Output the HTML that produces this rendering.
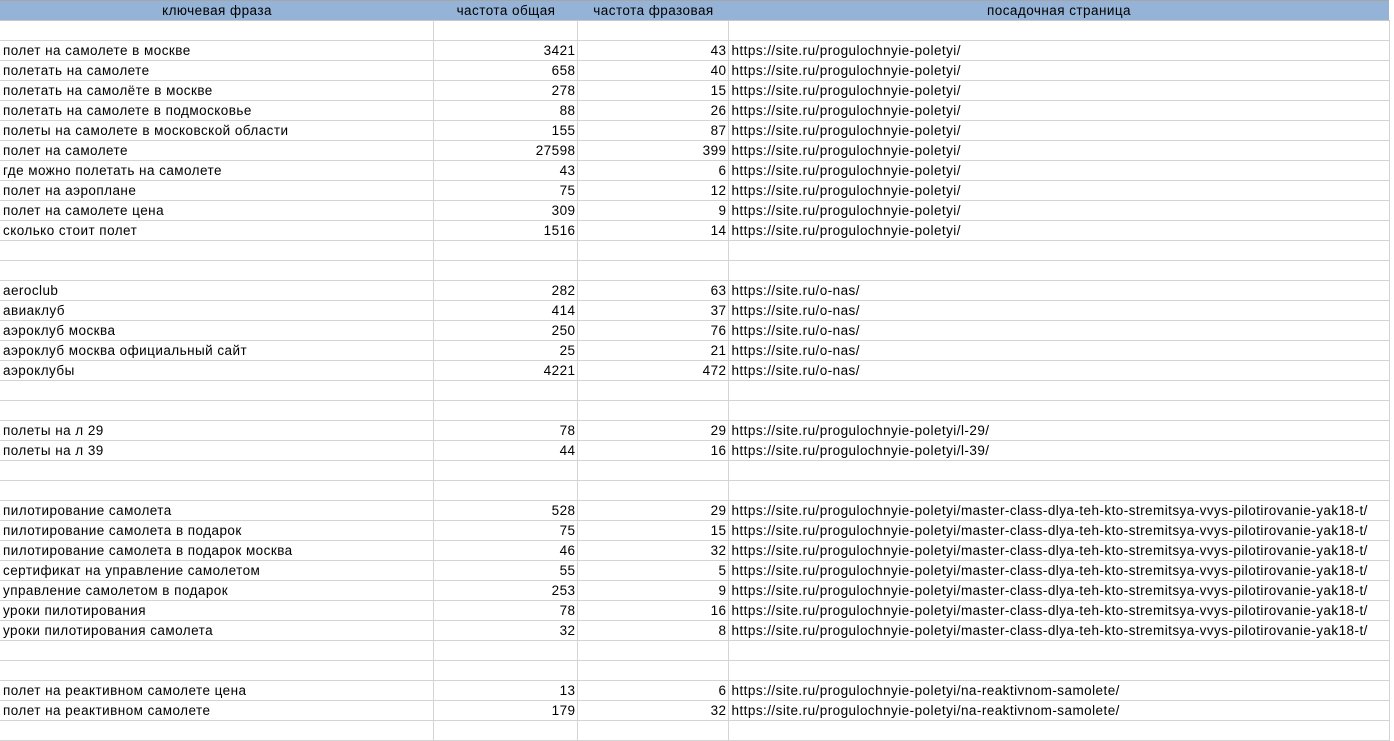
<!DOCTYPE html>
<html><head><meta charset="utf-8"><style>
body{margin:0;background:#fff;width:1394px;height:727px;overflow:hidden;font-family:"Liberation Sans","DejaVu Sans",sans-serif;font-size:13.5px;letter-spacing:0.45px;color:#000}
table{border-collapse:collapse;table-layout:fixed;position:absolute;left:0;top:0}
td{height:18px;padding:1px 2px 0 3px;border-bottom:1px solid #d4d4d4;border-right:1px solid #d4d4d4;white-space:nowrap;overflow:hidden;line-height:18px;box-sizing:content-box}
td:nth-child(2),td:nth-child(3){text-align:right;padding-right:1px}
tr.h td{background:#95b3d7;text-align:center;border-right:none;border-bottom:1px solid #c8c8c8;border-top:1px solid #a6a6a6;height:19px;padding-top:0;line-height:19px}
</style></head><body>
<table>
<colgroup><col style="width:433px"><col style="width:144px"><col style="width:151px"><col style="width:661px"></colgroup>
<tr class="h"><td style="text-align:center">ключевая фраза</td><td style="text-align:center">частота общая</td><td style="text-align:center">частота фразовая</td><td>посадочная страница</td></tr>
<tr><td></td><td></td><td></td><td></td></tr>
<tr><td>полет на самолете в москве</td><td>3421</td><td>43</td><td>https://site.ru/progulochnyie-poletyi/</td></tr>
<tr><td>полетать на самолете</td><td>658</td><td>40</td><td>https://site.ru/progulochnyie-poletyi/</td></tr>
<tr><td>полетать на самолёте в москве</td><td>278</td><td>15</td><td>https://site.ru/progulochnyie-poletyi/</td></tr>
<tr><td>полетать на самолете в подмосковье</td><td>88</td><td>26</td><td>https://site.ru/progulochnyie-poletyi/</td></tr>
<tr><td>полеты на самолете в московской области</td><td>155</td><td>87</td><td>https://site.ru/progulochnyie-poletyi/</td></tr>
<tr><td>полет на самолете</td><td>27598</td><td>399</td><td>https://site.ru/progulochnyie-poletyi/</td></tr>
<tr><td>где можно полетать на самолете</td><td>43</td><td>6</td><td>https://site.ru/progulochnyie-poletyi/</td></tr>
<tr><td>полет на аэроплане</td><td>75</td><td>12</td><td>https://site.ru/progulochnyie-poletyi/</td></tr>
<tr><td>полет на самолете цена</td><td>309</td><td>9</td><td>https://site.ru/progulochnyie-poletyi/</td></tr>
<tr><td>сколько стоит полет</td><td>1516</td><td>14</td><td>https://site.ru/progulochnyie-poletyi/</td></tr>
<tr><td></td><td></td><td></td><td></td></tr>
<tr><td></td><td></td><td></td><td></td></tr>
<tr><td>aeroclub</td><td>282</td><td>63</td><td>https://site.ru/o-nas/</td></tr>
<tr><td>авиаклуб</td><td>414</td><td>37</td><td>https://site.ru/o-nas/</td></tr>
<tr><td>аэроклуб москва</td><td>250</td><td>76</td><td>https://site.ru/o-nas/</td></tr>
<tr><td>аэроклуб москва официальный сайт</td><td>25</td><td>21</td><td>https://site.ru/o-nas/</td></tr>
<tr><td>аэроклубы</td><td>4221</td><td>472</td><td>https://site.ru/o-nas/</td></tr>
<tr><td></td><td></td><td></td><td></td></tr>
<tr><td></td><td></td><td></td><td></td></tr>
<tr><td>полеты на л 29</td><td>78</td><td>29</td><td>https://site.ru/progulochnyie-poletyi/l-29/</td></tr>
<tr><td>полеты на л 39</td><td>44</td><td>16</td><td>https://site.ru/progulochnyie-poletyi/l-39/</td></tr>
<tr><td></td><td></td><td></td><td></td></tr>
<tr><td></td><td></td><td></td><td></td></tr>
<tr><td>пилотирование самолета</td><td>528</td><td>29</td><td>https://site.ru/progulochnyie-poletyi/master-class-dlya-teh-kto-stremitsya-vvys-pilotirovanie-yak18-t/</td></tr>
<tr><td>пилотирование самолета в подарок</td><td>75</td><td>15</td><td>https://site.ru/progulochnyie-poletyi/master-class-dlya-teh-kto-stremitsya-vvys-pilotirovanie-yak18-t/</td></tr>
<tr><td>пилотирование самолета в подарок москва</td><td>46</td><td>32</td><td>https://site.ru/progulochnyie-poletyi/master-class-dlya-teh-kto-stremitsya-vvys-pilotirovanie-yak18-t/</td></tr>
<tr><td>сертификат на управление самолетом</td><td>55</td><td>5</td><td>https://site.ru/progulochnyie-poletyi/master-class-dlya-teh-kto-stremitsya-vvys-pilotirovanie-yak18-t/</td></tr>
<tr><td>управление самолетом в подарок</td><td>253</td><td>9</td><td>https://site.ru/progulochnyie-poletyi/master-class-dlya-teh-kto-stremitsya-vvys-pilotirovanie-yak18-t/</td></tr>
<tr><td>уроки пилотирования</td><td>78</td><td>16</td><td>https://site.ru/progulochnyie-poletyi/master-class-dlya-teh-kto-stremitsya-vvys-pilotirovanie-yak18-t/</td></tr>
<tr><td>уроки пилотирования самолета</td><td>32</td><td>8</td><td>https://site.ru/progulochnyie-poletyi/master-class-dlya-teh-kto-stremitsya-vvys-pilotirovanie-yak18-t/</td></tr>
<tr><td></td><td></td><td></td><td></td></tr>
<tr><td></td><td></td><td></td><td></td></tr>
<tr><td>полет на реактивном самолете цена</td><td>13</td><td>6</td><td>https://site.ru/progulochnyie-poletyi/na-reaktivnom-samolete/</td></tr>
<tr><td>полет на реактивном самолете</td><td>179</td><td>32</td><td>https://site.ru/progulochnyie-poletyi/na-reaktivnom-samolete/</td></tr>
<tr><td></td><td></td><td></td><td></td></tr>
</table>
</body></html>
